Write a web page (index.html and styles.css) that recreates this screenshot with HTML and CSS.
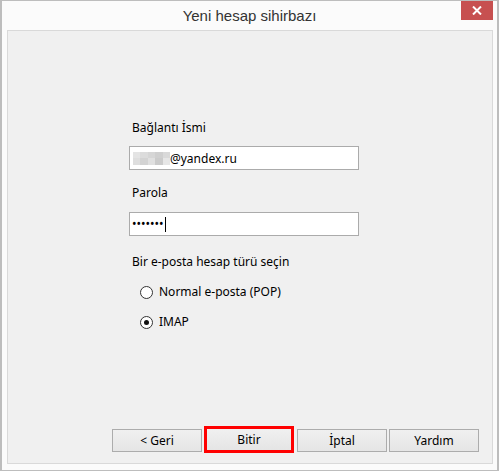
FILE: index.html
```html
<!DOCTYPE html>
<html lang="tr">
<head>
<meta charset="utf-8">
<title>Yeni hesap sihirbazı</title>
<link rel="stylesheet" href="styles.css">
</head>
<body>
<div class="window">
  <div class="titlebar">
    <span></span>
    <div class="title">Yeni hesap sihirbazı</div>
    <button class="close" aria-label="Kapat">
      <svg width="10" height="9" viewBox="0 0 10 9"><path d="M1 0.5 L9 8.5 M9 0.5 L1 8.5" stroke="#fff" stroke-width="2" fill="none"/></svg>
    </button>
  </div>
  <div class="panel">
    <div class="form">
      <label class="label first">Bağlantı İsmi</label>
      <div class="input">
        <span class="blur">
          <i class="b1"></i><i class="b2"></i><i class="b3"></i><i class="b4"></i><i class="b5"></i>
          <i class="b6"></i><i class="b7"></i><i class="b8"></i><i class="b9"></i><i class="b10"></i>
        </span>
        <span>@yandex.ru</span>
      </div>
      <label class="label second">Parola</label>
      <div class="input pass"><span class="dots">•••••••</span><span class="caret"></span></div>
      <div class="label third">Bir e-posta hesap türü seçin</div>
      <div class="radios">
        <div class="radio"><span class="circle"></span><span>Normal e-posta (POP)</span></div>
        <div class="radio"><span class="circle checked"></span><span>IMAP</span></div>
      </div>
    </div>
    <div class="buttons">
      <button class="btn">&lt; Geri</button>
      <button class="btn primary">Bitir</button>
      <button class="btn">İptal</button>
      <button class="btn">Yardım</button>
    </div>
  </div>
</div>
</body>
</html>
```
FILE: styles.css
```css
html, body {
  margin: 0;
  padding: 0;
  background: #fbfbfb;
}
body {
  font-family: "Noto Sans", "Liberation Sans", sans-serif;
  font-size: 12px;
  color: #000;
}
.window {
  width: 499px;
  height: 471px;
  box-sizing: border-box;
  background: #fbfbfb;
  border-top: 1px solid #bdbdbd;
  border-bottom: 1px solid #bdbdbd;
  border-left: 2px solid #bdbdbd;
  border-right: 2px solid #bdbdbd;
  display: flex;
  flex-direction: column;
}
.titlebar {
  height: 29px;
  display: grid;
  grid-template-columns: 1fr auto 1fr;
}
.title {
  font-family: "Liberation Sans", Arial, sans-serif;
  font-size: 15px;
  color: #333;
  line-height: 29px;
}
.close {
  justify-self: end;
  align-self: start;
  width: 32px;
  height: 19px;
  margin-right: 4px;
  border: 0;
  padding: 0;
  background: #c75050;
  display: flex;
  align-items: center;
  justify-content: center;
}
.panel {
  flex: 1;
  margin: 0 4px 6px 5px;
  background: #f0f0f0;
  border: 1px solid #d9d9d9;
  display: flex;
  flex-direction: column;
  justify-content: space-between;
}
.form {
  margin-left: 121px;
  width: 230px;
  display: flex;
  flex-direction: column;
}
.label {
  line-height: 16px;
  padding-left: 3px;
}
.first { margin-top: 89px; margin-bottom: 10px; }
.second { margin-top: 15px; margin-bottom: 11px; }
.third { margin-top: 18px; }
.input {
  height: 24px;
  box-sizing: border-box;
  border: 1px solid #ababab;
  background: #fff;
  display: flex;
  align-items: center;
  padding-left: 3px;
}
.blur {
  display: grid;
  grid-template-columns: repeat(5, 7.4px);
  grid-template-rows: 6px 7px;
  margin-top: 1px;
}
.blur i { display: block; }
.b1 { background: #e4e4e4; }
.b2 { background: #dcdcdc; }
.b3 { background: #d6d6d6; }
.b4 { background: #cfcfcf; }
.b5 { background: #d9d9d9; }
.b6 { background: #dedede; }
.b7 { background: #d3d3d3; }
.b8 { background: #e0e0e0; }
.b9 { background: #cbcbcb; }
.b10 { background: #e6e6e6; }
.pass { padding-left: 2px; }
.dots {
  font-size: 12px;
  line-height: 1;
}
.caret {
  width: 1px;
  height: 15px;
  background: #000;
  margin-left: 1px;
}
.radios {
  display: flex;
  flex-direction: column;
  gap: 14px;
  margin-top: 14px;
  padding-left: 11px;
}
.radio {
  display: flex;
  align-items: center;
  gap: 6px;
  line-height: 16px;
}
.circle {
  width: 13px;
  height: 13px;
  box-sizing: border-box;
  border: 1px solid #333;
  border-radius: 50%;
  background: #fff;
  display: flex;
  align-items: center;
  justify-content: center;
}
.circle.checked::after {
  content: "";
  width: 5px;
  height: 5px;
  border-radius: 50%;
  background: #111;
}
.buttons {
  display: flex;
  justify-content: flex-end;
  align-items: flex-end;
  padding: 0 13px 11px 0;
}
.btn {
  width: 90px;
  height: 23px;
  margin-left: 2px;
  box-sizing: border-box;
  border: 1px solid #acacac;
  background: linear-gradient(#f0f0f0, #e5e5e5);
  font-family: inherit;
  font-size: 12px;
  color: #000;
  padding: 0;
}
.primary {
  border: 3px solid #f00;
  height: 27px;
  width: 90px;
  margin-bottom: -1px;
  margin-right: 1px;
}
```
